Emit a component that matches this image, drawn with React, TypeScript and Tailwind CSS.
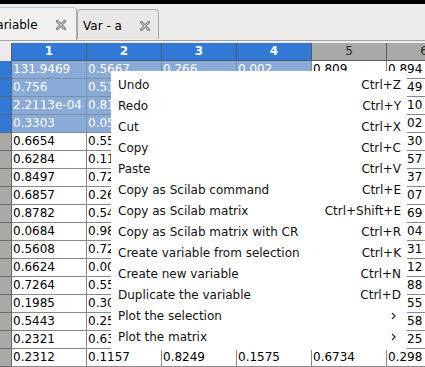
const cols = ["1", "2", "3", "4", "5", "6"];

// cells hidden behind the popup menu are left empty
const rows = [
  ["131.9469", "0.5667", "0.266", "0.002", "0.809", "0.894"],
  ["0.756", "0.5129", "", "", "", "0.149"],
  ["2.2113e-04", "0.8162", "", "", "", "0.610"],
  ["0.3303", "0.0525", "", "", "", "0.402"],
  ["0.6654", "0.5597", "", "", "", "0.230"],
  ["0.6284", "0.1121", "", "", "", "0.957"],
  ["0.8497", "0.7237", "", "", "", "0.137"],
  ["0.6857", "0.2606", "", "", "", "0.507"],
  ["0.8782", "0.5422", "", "", "", "0.769"],
  ["0.0684", "0.9872", "", "", "", "0.304"],
  ["0.5608", "0.7219", "", "", "", "0.631"],
  ["0.6624", "0.0063", "", "", "", "0.012"],
  ["0.7264", "0.5585", "", "", "", "0.388"],
  ["0.1985", "0.3002", "", "", "", "0.755"],
  ["0.5443", "0.2533", "", "", "", "0.458"],
  ["0.2321", "0.6307", "", "", "", "0.925"],
  ["0.2312", "0.1157", "0.8249", "0.1575", "0.6734", "0.298"],
];

const menu: { label: string; key?: string; sub?: boolean }[] = [
  { label: "Undo", key: "Ctrl+Z" },
  { label: "Redo", key: "Ctrl+Y" },
  { label: "Cut", key: "Ctrl+X" },
  { label: "Copy", key: "Ctrl+C" },
  { label: "Paste", key: "Ctrl+V" },
  { label: "Copy as Scilab command", key: "Ctrl+E" },
  { label: "Copy as Scilab matrix", key: "Ctrl+Shift+E" },
  { label: "Copy as Scilab matrix with CR", key: "Ctrl+R" },
  { label: "Create variable from selection", key: "Ctrl+K" },
  { label: "Create new variable", key: "Ctrl+N" },
  { label: "Duplicate the variable", key: "Ctrl+D" },
  { label: "Plot the selection", sub: true },
  { label: "Plot the matrix", sub: true },
];

function CloseIcon() {
  return (
    <svg width="10" height="10" viewBox="0 0 10 10">
      <path
        d="M1 1 L9 9 M9 1 L1 9"
        stroke="#8c8c8c"
        strokeWidth="3"
        strokeLinecap="square"
      />
      <path
        d="M1.5 1.5 L8.5 8.5 M8.5 1.5 L1.5 8.5"
        stroke="#c9c9c9"
        strokeWidth="1"
      />
    </svg>
  );
}

export default function App() {
  return (
    <div
      className="relative w-[425px] h-[367px] overflow-hidden bg-[#edeceb] text-[12px] text-black"
      style={{ fontFamily: '"DejaVu Sans", sans-serif' }}
    >
      {/* Window top */}
      <div className="h-[4px] bg-black" />

      {/* Tabs */}
      <div className="flex h-[37px] items-end border-b border-[#a3a3a3]">
        <div className="-ml-[11px] flex h-[33px] w-[88px] shrink-0 items-center rounded-tr-[4px] border-t border-r border-t-[#b9cbe0] border-r-[#a8a8a8] bg-[#f2f1f0] pt-[2px]">
          <span>Variable</span>
          <span className="ml-auto mr-[10px] flex">
            <CloseIcon />
          </span>
        </div>
        <div className="mb-[1px] flex h-[30px] w-[82px] shrink-0 items-center rounded-t-[4px] border border-b-0 border-[#a8a8a8] bg-[#e9e8e6] pl-[5px] pt-[2px]">
          <span>Var - a</span>
          <span className="ml-auto mr-[8px] flex">
            <CloseIcon />
          </span>
        </div>
      </div>

      {/* Grid */}
      <div className="mt-[2px] flex flex-col leading-[17px]">
        <div className="flex h-[18px]">
          <div className="w-[12px] shrink-0 border-r border-[#5c5c5c]" />
          {cols.map((c, i) => (
            <div
              key={c}
              className={
                i < 4
                  ? "w-[75px] shrink-0 border-r border-b border-[#4f5a6a] bg-[#3279d6] text-center font-bold text-white"
                  : "w-[75px] shrink-0 border-r border-b border-[#5c5c5c] bg-[#a9a9a6] text-center text-[#2a2a2a]"
              }
            >
              {c}
            </div>
          ))}
        </div>

        {rows.map((r, ri) => (
          <div key={ri} className="flex h-[18px]">
            <div
              className={
                ri < 4
                  ? "w-[12px] shrink-0 border-r border-b border-[#55657c] bg-[#3279d6]"
                  : "w-[12px] shrink-0 border-r border-b border-[#6a6a6a] bg-[#a9a9a6]"
              }
            />
            {r.map((v, ci) => (
              <div
                key={ci}
                className={
                  ri < 4 && ci < 4
                    ? "w-[75px] shrink-0 overflow-hidden whitespace-nowrap border-r border-b border-[#7c8ea8] bg-[#8aaad8] pl-[1px] text-white"
                    : "w-[75px] shrink-0 overflow-hidden whitespace-nowrap border-r border-b border-[#8a8a8a] bg-white pl-[1px] text-black"
                }
              >
                {v}
              </div>
            ))}
          </div>
        ))}
      </div>

      {/* Context menu */}
      <div className="absolute left-[111px] top-[71px] flex w-[296px] flex-col bg-white py-[3px] text-[#111]">
        {menu.map((m) => (
          <div
            key={m.label}
            className="flex h-[21px] items-center justify-between pl-[7px] pr-[6px]"
          >
            <span>{m.label}</span>
            {m.key && <span>{m.key}</span>}
            {m.sub && (
              <svg width="5" height="8" viewBox="0 0 5 8" className="mr-[5px]">
                <path d="M1 1 L4 4 L1 7" stroke="#333" strokeWidth="1.3" fill="none" />
              </svg>
            )}
          </div>
        ))}
      </div>
    </div>
  );
}
